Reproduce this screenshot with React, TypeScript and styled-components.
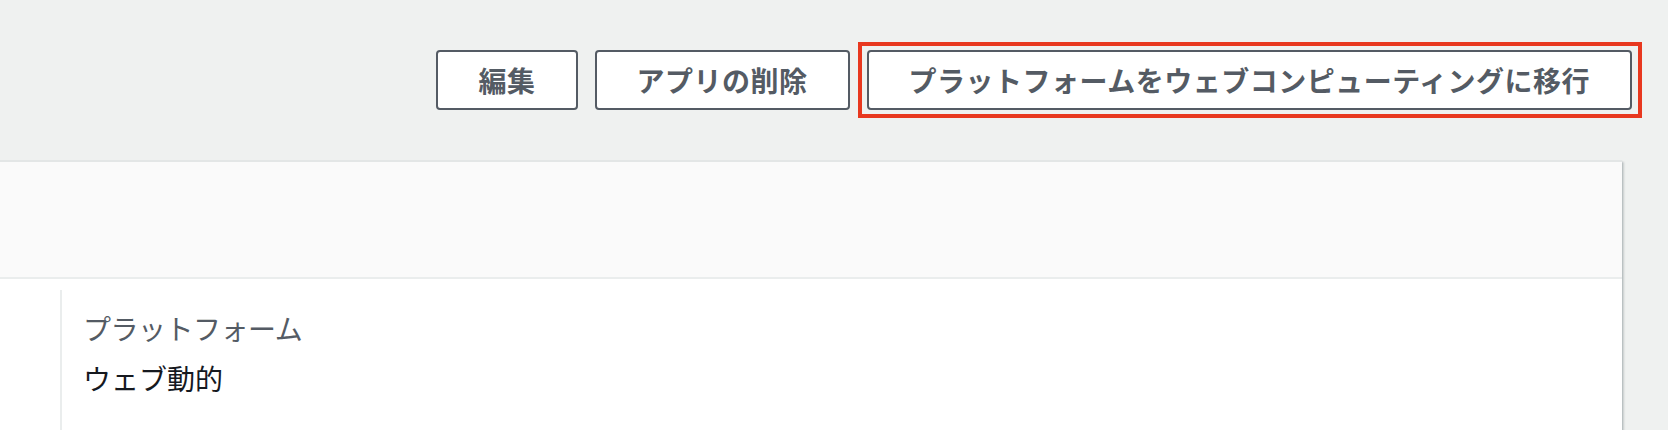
import React from "react";
import styled, { createGlobalStyle } from "styled-components";

const GlobalStyle = createGlobalStyle`
  html, body {
    margin: 0;
    padding: 0;
    background: #eff1f0;
    overflow: hidden;
  }
  body {
    font-family: "Noto Sans CJK JP", "Noto Sans", "Liberation Sans", sans-serif;
  }
`;

const Page = styled.div`
  width: 1668px;
  height: 430px;
  display: flex;
  flex-direction: column;
  overflow: hidden;
`;

const ActionBar = styled.div`
  display: flex;
  justify-content: flex-end;
  align-items: flex-start;
  gap: 17px;
  padding: 50px 36px 0 0;
  height: 110px;
  box-sizing: border-box;
`;

const Button = styled.button`
  height: 60px;
  box-sizing: border-box;
  padding: 0 40px;
  border: 2px solid #545b64;
  border-radius: 4px;
  background: #ffffff;
  color: #545b64;
  font-family: "Noto Sans CJK JP", "Noto Sans", sans-serif;
  font-weight: 700;
  font-size: 28px;
  letter-spacing: 0.5px;
  line-height: 56px;
  white-space: nowrap;
  cursor: pointer;
`;

const Highlight = styled.div`
  position: relative;
  display: flex;
  &::after {
    content: "";
    position: absolute;
    top: -8px;
    bottom: -8px;
    left: -9px;
    right: -10px;
    border: 4px solid #e8381f;
    pointer-events: none;
  }
`;

const Panel = styled.section`
  margin-top: 50px;
  margin-left: -20px;
  width: 1642px;
  flex: 1;
  display: flex;
  flex-direction: column;
  background: #ffffff;
  border-top: 2px solid #e3e6e6;
  box-shadow: 0 2px 2px 0 rgba(0, 28, 36, 0.3), 2px 2px 2px 0 rgba(0, 28, 36, 0.15);
`;

const PanelHeader = styled.div`
  height: 115px;
  background: #fafafa;
  border-bottom: 2px solid #eaeded;
`;

const PanelBody = styled.div`
  flex: 1;
  display: flex;
  padding-top: 11px;
`;

const Column = styled.div`
  margin-left: 80px;
  border-left: 2px solid #eaeded;
  padding: 16px 0 0 21px;
  flex: 1;
  display: flex;
  flex-direction: column;
  gap: 6px;
`;

const Label = styled.div`
  font-size: 28px;
  line-height: 44px;
  letter-spacing: -0.5px;
  color: #545b64;
`;

const Value = styled.div`
  font-size: 28px;
  line-height: 44px;
  color: #16191f;
`;

export default function App() {
  return (
    <>
      <GlobalStyle />
      <Page>
        <ActionBar>
          <Button>編集</Button>
          <Button>アプリの削除</Button>
          <Highlight>
            <Button>プラットフォームをウェブコンピューティングに移行</Button>
          </Highlight>
        </ActionBar>
        <Panel>
          <PanelHeader />
          <PanelBody>
            <Column>
              <Label>プラットフォーム</Label>
              <Value>ウェブ動的</Value>
            </Column>
          </PanelBody>
        </Panel>
      </Page>
    </>
  );
}
